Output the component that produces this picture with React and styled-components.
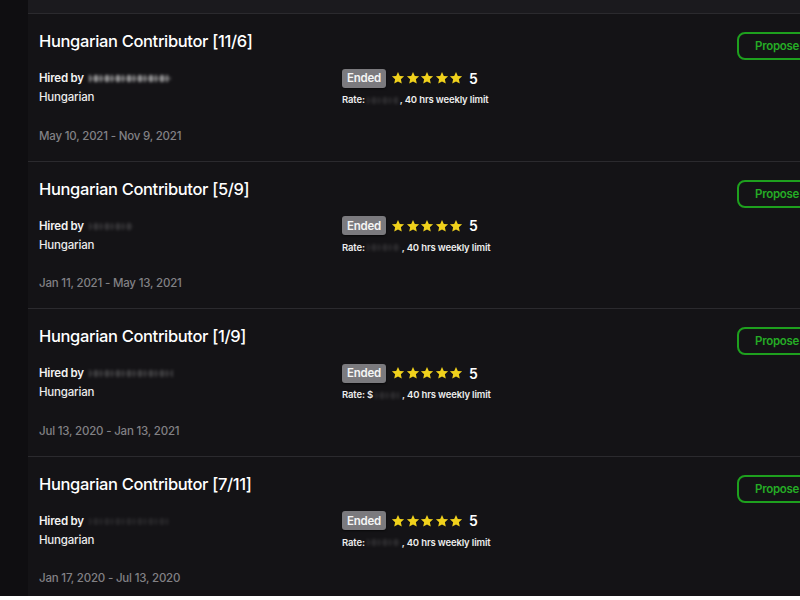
import React from "react";
import styled, { createGlobalStyle } from "styled-components";

const Global = createGlobalStyle`
  html, body { margin: 0; padding: 0; background: #ffffff; }
  body { font-family: Inter, "Liberation Sans", Arial, sans-serif; }
  * { box-sizing: border-box; }
`;

const Page = styled.div`
  display: flex;
  width: 800px;
  height: 596px;
  overflow: hidden;
  background: #141316;
`;

const Rail = styled.aside`
  width: 28px;
  flex: none;
  background: #0f0e11;
`;

const Main = styled.main`
  flex: 1;
  display: flex;
  flex-direction: column;
  min-width: 0;
`;

const TopStrip = styled.div`
  height: 13px;
  flex: none;
  background: #1b1a1e;
`;

const Row = styled.section`
  flex: none;
  height: 147.5px;
  border-top: 1px solid #2b2a2e;
  display: grid;
  grid-template-columns: 303px 1fr auto;
  padding: 17px 0 0 11px;
`;

const Left = styled.div`
  display: flex;
  flex-direction: column;
`;

const Title = styled.h2`
  margin: 0;
  font-size: 16.5px;
  line-height: 20px;
  font-weight: 500;
  color: #ffffff;
  letter-spacing: -0.35px;
`;

const Hired = styled.div`
  margin-top: 18px;
  font-size: 11.5px;
  line-height: 19px;
  font-weight: 600;
  color: #f2f2f2;
  letter-spacing: -0.2px;
  display: flex;
  align-items: center;
  gap: 5px;
`;

/* masked name / amount: a soft, uneven smear in place of the text */
const Masked = styled.span`
  display: inline-block;
  flex: none;
  width: ${(p) => p.$w}px;
  height: 7px;
  opacity: ${(p) => p.$o};
  background:
    repeating-linear-gradient(90deg, #ffffff 0 2px, transparent 2px 5px, #ffffff 5px 9px, transparent 9px 11px),
    linear-gradient(180deg, transparent 0 2px, rgba(255, 255, 255, 0.4) 2px 5px, transparent 5px);
  filter: blur(1.4px);
`;

const Lang = styled.div`
  font-size: 11.5px;
  line-height: 19px;
  font-weight: 500;
  letter-spacing: -0.2px;
  color: #ececec;
`;

const Dates = styled.div`
  margin-top: 19.5px;
  font-size: 11.5px;
  line-height: 19px;
  font-weight: 500;
  letter-spacing: -0.2px;
  color: #828185;
`;

const Middle = styled.div`
  display: flex;
  flex-direction: column;
  padding-top: 37px;
`;

const StatusLine = styled.div`
  display: flex;
  align-items: center;
  height: 20px;
`;

const Badge = styled.span`
  display: inline-flex;
  align-items: center;
  justify-content: center;
  width: 44px;
  height: 19px;
  border-radius: 3px;
  background: #7b7a7e;
  color: #f4f4f4;
  font-size: 11.5px;
  font-weight: 600;
  letter-spacing: -0.2px;
  box-shadow: 0 1px 2px rgba(0, 0, 0, 0.6);
`;

const Stars = styled.span`
  display: inline-flex;
  gap: 0.5px;
  margin-left: 5px;
`;

const Score = styled.span`
  margin-left: 6px;
  color: #ffffff;
  font-size: 14px;
  font-weight: 600;
`;

const RateLine = styled.div`
  margin-top: 5px;
  font-size: 9.5px;
  line-height: 14px;
  font-weight: 600;
  letter-spacing: -0.15px;
  color: #ededed;
  display: flex;
  align-items: center;
  gap: 2px;
`;

const Side = styled.div`
  padding-top: 1px;
  display: flex;
  justify-content: flex-end;
  margin-right: -15px;
`;

const Propose = styled.button`
  height: 28px;
  padding: 0 14px 0 16px;
  border: 2px solid #1ea01e;
  border-radius: 8px;
  background: transparent;
  color: #25ac25;
  font-family: inherit;
  font-size: 11.5px;
  font-weight: 600;
  letter-spacing: -0.3px;
  cursor: pointer;
`;

const Star = () => (
  <svg width="14" height="14" viewBox="0 0 24 24">
    <path
      fill="#f0d11c"
      d="M12 1.5l3.1 6.9 7.4.8-5.6 5 1.6 7.4L12 17.8l-6.5 3.8 1.6-7.4-5.6-5 7.4-.8z"
    />
  </svg>
);

const jobs = [
  { title: "Hungarian Contributor [11/6]", dates: "May 10, 2021 - Nov 9, 2021", nameW: 82, nameO: 0.55, rateW: 31, rate: "" },
  { title: "Hungarian Contributor [5/9]", dates: "Jan 11, 2021 - May 13, 2021", nameW: 44, nameO: 0.14, rateW: 33, rate: "" },
  { title: "Hungarian Contributor [1/9]", dates: "Jul 13, 2020 - Jan 13, 2021", nameW: 84, nameO: 0.18, rateW: 25, rate: "$" },
  { title: "Hungarian Contributor [7/11]", dates: "Jan 17, 2020 - Jul 13, 2020", nameW: 80, nameO: 0.08, rateW: 33, rate: "" },
];

export default function App() {
  return (
    <>
      <Global />
      <Page>
        <Rail />
        <Main>
          <TopStrip />
          {jobs.map((j) => (
            <Row key={j.title}>
              <Left>
                <Title>{j.title}</Title>
                <Hired>
                  <span>Hired by</span>
                  <Masked $w={j.nameW} $o={j.nameO} />
                </Hired>
                <Lang>Hungarian</Lang>
                <Dates>{j.dates}</Dates>
              </Left>
              <Middle>
                <StatusLine>
                  <Badge>Ended</Badge>
                  <Stars>
                    <Star />
                    <Star />
                    <Star />
                    <Star />
                    <Star />
                  </Stars>
                  <Score>5</Score>
                </StatusLine>
                <RateLine>
                  <span>Rate: {j.rate}</span>
                  <Masked $w={j.rateW} $o={0.1} />
                  <span>, 40 hrs weekly limit</span>
                </RateLine>
              </Middle>
              <Side>
                <Propose>Propose</Propose>
              </Side>
            </Row>
          ))}
        </Main>
      </Page>
    </>
  );
}
